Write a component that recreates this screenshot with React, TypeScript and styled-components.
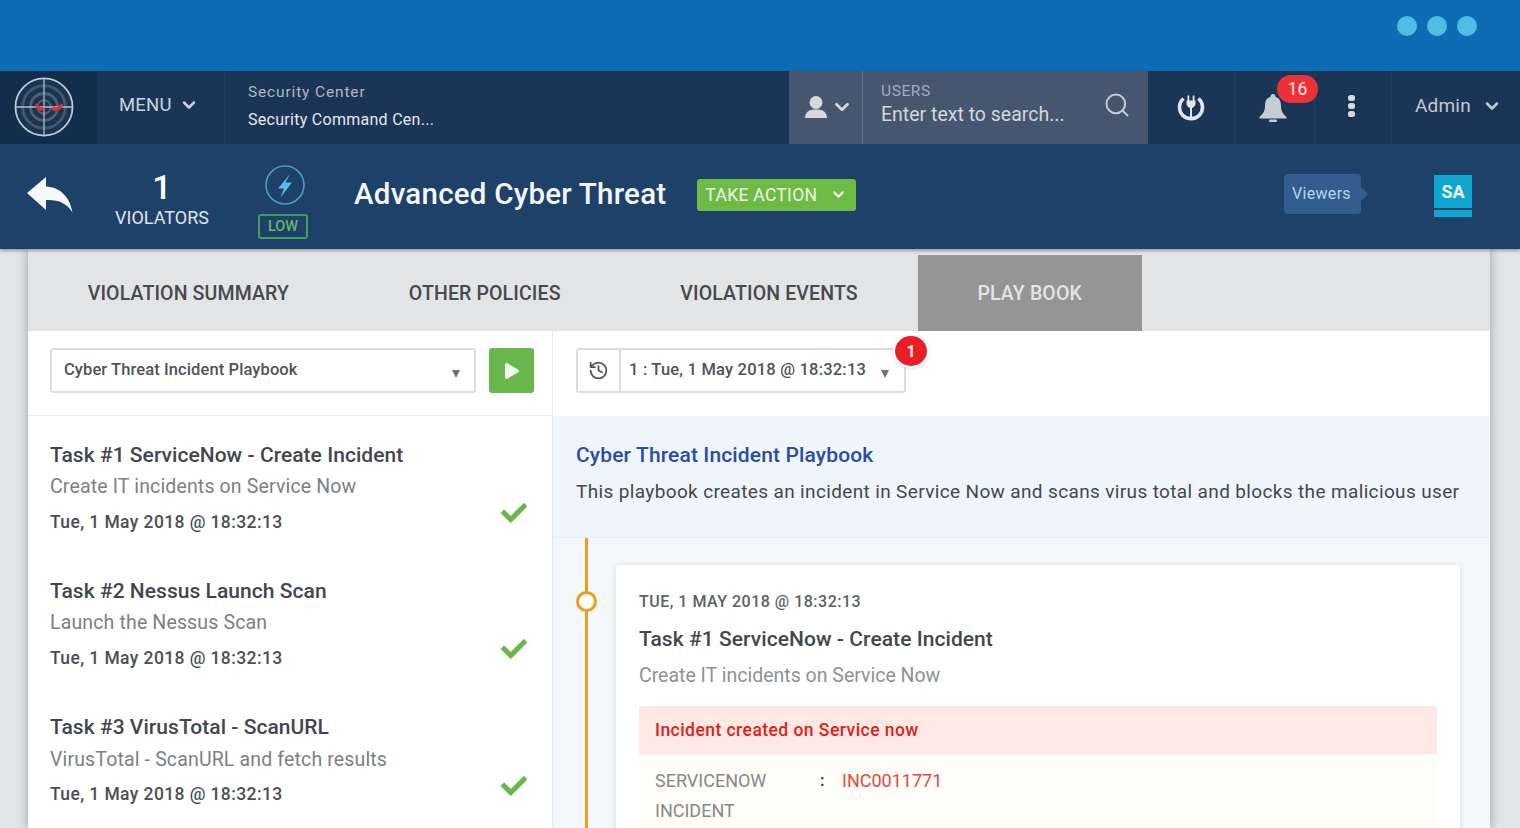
import styled, { createGlobalStyle } from "styled-components";
import { ChevronDown, History, Search } from "lucide-react";
import { FaCheck, FaPlay } from "react-icons/fa";

const tasks = [
  {
    title: "Task #1 ServiceNow - Create Incident",
    desc: "Create IT incidents on Service Now",
  },
  { title: "Task #2 Nessus Launch Scan", desc: "Launch the Nessus Scan" },
  {
    title: "Task #3 VirusTotal - ScanURL",
    desc: "VirusTotal - ScanURL and fetch results",
  },
];

const tabs = ["VIOLATION SUMMARY", "OTHER POLICIES", "VIOLATION EVENTS", "PLAY BOOK"];

const App = () => {
  return (
    <Page>
      <GlobalStyle />
      <TopBand>
        <Dot />
        <Dot />
        <Dot />
      </TopBand>
      <Nav>
        <LogoCell>
          <svg width="60" height="60" viewBox="0 0 62 62" fill="none">
            <circle cx="31" cy="31" r="29.500" stroke="#c3cbd4" strokeWidth="1.800" fill="#1a3350" />
            <circle cx="31" cy="31" r="22" stroke="#42566d" strokeWidth="3" />
            <circle cx="31" cy="31" r="14" stroke="#4c6076" strokeWidth="3" />
            <circle cx="31" cy="31" r="7" stroke="#4c6076" strokeWidth="2" />
            <path d="M31 1v60M1 31h60" stroke="#b6bfca" strokeWidth="1.300" />
            <path
              d="M23.500 29.500c1.500 2.500 3.500 3.500 6.500 3.500M49 29.500c-1.500 2.500-4 3.500-8.500 3.500"
              stroke="#ea2f2a"
              strokeWidth="3.600"
              strokeLinecap="round"
            />
          </svg>
        </LogoCell>
        <MenuCell>
          MENU
          <ChevronDown size={20} strokeWidth={3} />
        </MenuCell>
        <ContextCell>
          <ContextLabel>Security Center</ContextLabel>
          <ContextValue>Security Command Cen...</ContextValue>
        </ContextCell>
        <UserToggle>
          <svg width="22" height="22" viewBox="0 0 22 22" fill="#d5d9de">
            <circle cx="11" cy="6.500" r="6.500" />
            <path d="M0 22c0-5 3-7.500 7.500-8.500h7C19 14.500 22 17 22 22z" />
          </svg>
          <ChevronDown size={22} strokeWidth={3} />
        </UserToggle>
        <SearchCell>
          <div>
            <SearchLabel>USERS</SearchLabel>
            <SearchHint>Enter text to search...</SearchHint>
          </div>
          <Search size={28} strokeWidth={1.700} />
        </SearchCell>
        <IconCell $width={87}>
          <svg width="30" height="27" viewBox="0 0 30 27" fill="none">
            <path
              d="M7.500 4.500A11.500 11.500 0 1 0 22.500 4.500"
              stroke="#e2e6eb"
              strokeWidth="3.600"
            />
            <path
              d="M11.500 1.500h1.800v5h3.400v-5h1.800v5h1v3c0 2.500-2 4-3.500 4.500v10h-2V14c-1.500-.5-3.500-2-3.500-4.500v-3h1z"
              fill="#e2e6eb"
            />
          </svg>
        </IconCell>
        <IconCell $width={80}>
          <BellWrap>
            <svg width="28" height="28" viewBox="0 0 28 28" fill="#c6ccd4">
              <path d="M14 0c2 0 2.500 1.500 2.500 2.800C21 4.500 22 8 22 12c0 5 2 8 5.500 11v1.500H.5V23C4 20 6 17 6 12c0-4 1-7.500 5.500-9.200C11.500 1.500 12 0 14 0z" />
              <rect x="10" y="25.500" width="8" height="2.500" rx="1.200" />
            </svg>
            <BellBadge>16</BellBadge>
          </BellWrap>
        </IconCell>
        <IconCell $width={77}>
          <Kebab>
            <i />
            <i />
            <i />
          </Kebab>
        </IconCell>
        <AdminCell>
          Admin
          <ChevronDown size={20} strokeWidth={3} />
        </AdminCell>
      </Nav>
      <SubHeader>
        <BackCell>
          <svg width="46" height="36" viewBox="0 0 46 36" fill="#f6f8fa">
            <path d="M0 16L19 0v9.500C33 10 43 20 45.500 35.500 40 26 31 22.500 19 23v10z" />
          </svg>
        </BackCell>
        <Violators>
          <strong>1</strong>
          <span>VIOLATORS</span>
        </Violators>
        <Severity>
          <svg width="40" height="40" viewBox="0 0 40 40" fill="none">
            <circle cx="20" cy="20" r="19" stroke="#4d9ac5" strokeWidth="1.600" />
            <path d="M25 9L13 23.500h6L15.500 32.500 27 17.500h-6.500z" fill="#5db9e8" />
          </svg>
          <LowTag>LOW</LowTag>
        </Severity>
        <PageTitle>Advanced Cyber Threat</PageTitle>
        <ActionButton>
          TAKE ACTION
          <ChevronDown size={17} strokeWidth={3} />
        </ActionButton>
        <Viewers>Viewers</Viewers>
        <Avatar>
          <AvatarFace>SA</AvatarFace>
          <AvatarBar />
        </Avatar>
      </SubHeader>
      <Sheet>
        <TabBar>
          {tabs.map((tab, i) => (
            <Tab key={tab} $active={i === 3}>
              {tab}
            </Tab>
          ))}
        </TabBar>
        <Columns>
          <LeftColumn>
            <LeftToolbar>
              <PlaybookSelect>
                Cyber Threat Incident Playbook
                <Caret />
              </PlaybookSelect>
              <PlayButton>
                <FaPlay size={16} />
              </PlayButton>
            </LeftToolbar>
            {tasks.map((task) => (
              <TaskRow key={task.title}>
                <TaskTitle>{task.title}</TaskTitle>
                <TaskDesc>{task.desc}</TaskDesc>
                <TaskDate>Tue, 1 May 2018 @ 18:32:13</TaskDate>
                <TaskCheck>
                  <FaCheck size={26} />
                </TaskCheck>
              </TaskRow>
            ))}
          </LeftColumn>
          <RightColumn>
            <RightToolbar>
              <RunSelect>
                <RunIcon>
                  <History size={21} strokeWidth={2} />
                </RunIcon>
                <RunValue>
                  1 : Tue, 1 May 2018 @ 18:32:13
                  <Caret />
                </RunValue>
                <RunBadge>1</RunBadge>
              </RunSelect>
            </RightToolbar>
            <Intro>
              <IntroTitle>Cyber Threat Incident Playbook</IntroTitle>
              <IntroText>
                This playbook creates an incident in Service Now and scans virus total and blocks the malicious user
              </IntroText>
            </Intro>
            <Timeline>
              <TimelineDot />
              <EventCard>
                <EventDate>TUE, 1 MAY 2018 @ 18:32:13</EventDate>
                <EventTitle>Task #1 ServiceNow - Create Incident</EventTitle>
                <EventDesc>Create IT incidents on Service Now</EventDesc>
                <Alert>
                  <AlertHead>Incident created on Service now</AlertHead>
                  <AlertBody>
                    <AlertKey>SERVICENOW INCIDENT</AlertKey>
                    <AlertColon>:</AlertColon>
                    <AlertValue>INC0011771</AlertValue>
                  </AlertBody>
                </Alert>
              </EventCard>
            </Timeline>
          </RightColumn>
        </Columns>
      </Sheet>
    </Page>
  );
};

const GlobalStyle = createGlobalStyle`
  html, body {
    margin: 0;
    height: 100%;
    overflow: hidden;
  }
  body {
    font-family: Roboto, "Liberation Sans", sans-serif;
  }
  * {
    box-sizing: border-box;
  }
`;
const Page = styled.div`
  width: 1520px;
  height: 828px;
  overflow: hidden;
  display: flex;
  flex-direction: column;
  background: #e1e5e8;
`;
const TopBand = styled.div`
  height: 71px;
  flex: none;
  background: #0d6db4;
  display: flex;
  justify-content: flex-end;
  align-items: flex-start;
  gap: 10px;
  padding: 16px 43px 0 0;
`;
const Dot = styled.span`
  width: 20px;
  height: 20px;
  border-radius: 50%;
  background: #4fbce3;
`;
const Nav = styled.div`
  height: 73px;
  flex: none;
  display: flex;
  background: #1a3556;
  color: #e3e6ea;
`;
const LogoCell = styled.div`
  width: 97px;
  background: #132d4c;
  display: flex;
  align-items: center;
  padding: 0 0 1px 14px;
`;
const MenuCell = styled.div`
  width: 128px;
  display: flex;
  align-items: center;
  gap: 7px;
  padding: 0 0 6px 22px;
  font-size: 18.500px;
  letter-spacing: 0.2px;
  color: #cdd3da;
  border-right: 1px solid #223d5e;
`;
const ContextCell = styled.div`
  width: 564px;
  padding: 12px 0 0 23px;
  display: flex;
  flex-direction: column;
  gap: 8px;
`;
const ContextLabel = styled.span`
  font-size: 15.500px;
  line-height: 19px;
  color: #aeb7c2;
  letter-spacing: 0.85px;
`;
const ContextValue = styled.span`
  font-size: 16px;
  line-height: 19px;
  color: #e6e9ed;
  letter-spacing: 0.28px;
`;
const UserToggle = styled.div`
  width: 74px;
  background: #46566f;
  border-right: 1px solid #66748a;
  display: flex;
  align-items: center;
  gap: 4px;
  padding: 0 0 2px 16px;
  color: #d5d9de;
`;
const SearchCell = styled.div`
  width: 285px;
  background: #46566f;
  display: flex;
  align-items: center;
  justify-content: space-between;
  padding: 0 17px 5px 18px;
  color: #c2c9d2;
`;
const SearchLabel = styled.div`
  font-size: 15.500px;
  line-height: 19px;
  letter-spacing: 0.6px;
  color: #a3adba;
`;
const SearchHint = styled.div`
  font-size: 19.500px;
  line-height: 27px;
  color: #d2d7dd;
`;
const IconCell = styled.div<{ $width: number }>`
  width: ${(p) => p.$width}px;
  display: flex;
  align-items: center;
  justify-content: center;
  border-right: 1px solid #223d5e;
`;
const BellWrap = styled.div`
  position: relative;
  display: flex;
  margin: 1px 0 0 -3px;
`;
const BellBadge = styled.span`
  position: absolute;
  top: -19px;
  left: 18px;
  width: 41px;
  height: 28px;
  border-radius: 14px;
  background: #ec3237;
  color: #fbe9e9;
  font-size: 17.500px;
  display: flex;
  align-items: center;
  justify-content: center;
`;
const Kebab = styled.div`
  display: flex;
  flex-direction: column;
  gap: 1.500px;
  margin: 0 3px 3px 0;

  i {
    width: 7px;
    height: 6.500px;
    border-radius: 2.500px;
    background: #d6dae0;
  }
`;
const AdminCell = styled.div`
  flex: 1;
  display: flex;
  align-items: center;
  gap: 11px;
  padding: 0 0 4px 23px;
  font-size: 19px;
  letter-spacing: 0.2px;
  color: #c2c9d2;
`;
const SubHeader = styled.div`
  height: 105px;
  flex: none;
  display: flex;
  align-items: center;
  background: #1e4169;
  color: #fff;
  box-shadow: 0 2px 3px rgba(0, 0, 0, 0.3);
  position: relative;
  z-index: 1;
`;
const BackCell = styled.div`
  width: 96px;
  padding: 0 0 4px 27px;
  display: flex;
`;
const Violators = styled.div`
  width: 132px;
  display: flex;
  flex-direction: column;
  align-items: center;
  margin-top: 2px;

  strong {
    font-size: 34px;
    line-height: 40px;
    font-weight: 500;
  }
  span {
    font-size: 18px;
    line-height: 21px;
    color: #e0e5ea;
  }
`;
const Severity = styled.div`
  width: 50px;
  margin-left: 30px;
  display: flex;
  flex-direction: column;
  align-items: center;
  gap: 9px;
  padding-top: 11px;

  svg {
    margin-left: 4px;
  }
`;
const LowTag = styled.span`
  width: 50px;
  height: 25px;
  border: 2px solid #3f9f5b;
  border-radius: 3px;
  color: #62b86c;
  font-size: 14.500px;
  font-weight: 500;
  display: flex;
  align-items: center;
  justify-content: center;
`;
const PageTitle = styled.h1`
  margin: 0 0 0 46px;
  padding-bottom: 6px;
  font-size: 29.500px;
  font-weight: 500;
  letter-spacing: 0.24px;
  color: #f4f6f8;
  white-space: nowrap;
`;
const ActionButton = styled.div`
  margin: 0 0 4px 31px;
  width: 159px;
  height: 32px;
  flex: none;
  background: #6dbb45;
  border-radius: 3px;
  color: #edf7e8;
  font-size: 17.500px;
  letter-spacing: 0.3px;
  display: flex;
  align-items: center;
  justify-content: space-between;
  padding: 0 9px 0 8px;
`;
const Viewers = styled.div`
  margin: 0 0 6px auto;
  width: 77px;
  height: 40px;
  background: #335d8e;
  border-radius: 4px;
  color: #b5d6ef;
  font-size: 16px;
  letter-spacing: 0.3px;
  padding-right: 2px;
  display: flex;
  align-items: center;
  justify-content: center;
  position: relative;

  &::after {
    content: "";
    position: absolute;
    right: -7px;
    top: 13px;
    border-left: 7px solid #335d8e;
    border-top: 7px solid transparent;
    border-bottom: 7px solid transparent;
  }
`;
const Avatar = styled.div`
  width: 38px;
  margin: 0 48px 1px 73px;
  display: flex;
  flex-direction: column;
  gap: 2px;
`;
const AvatarFace = styled.div`
  height: 33px;
  background: #0fa7cf;
  color: #eaf8fc;
  font-size: 18px;
  font-weight: 700;
  display: flex;
  align-items: center;
  justify-content: center;
`;
const AvatarBar = styled.div`
  height: 7px;
  background: #0fa7cf;
`;
const Sheet = styled.div`
  flex: 1;
  margin: 0 30px 0 28px;
  padding-top: 6px;
  background: #e3e4e6;
  display: flex;
  flex-direction: column;
  min-height: 0;
  box-shadow: 0 0 10px rgba(0, 0, 0, 0.32);
`;
const TabBar = styled.div`
  height: 76px;
  flex: none;
  display: flex;
`;
const Tab = styled.div<{ $active?: boolean }>`
  padding: 0 60px 0 59.700px;
  display: flex;
  align-items: center;
  font-size: 19.500px;
  font-weight: 500;
  letter-spacing: 0.14px;
  color: ${(p) => (p.$active ? "#e4e4e4" : "#46494e")};
  background: ${(p) => (p.$active ? "#959595" : "transparent")};
  white-space: nowrap;
`;
const Columns = styled.div`
  flex: 1;
  display: flex;
  background: #fff;
  min-height: 0;
`;
const LeftColumn = styled.div`
  width: 525px;
  flex: none;
  border-right: 1px solid #e8eaed;
`;
const LeftToolbar = styled.div`
  height: 85px;
  display: flex;
  gap: 13px;
  padding: 17px 18px 0 22px;
  border-bottom: 1px solid #e8eaed;
`;
const PlaybookSelect = styled.div`
  width: 427px;
  height: 45px;
  border: 2px solid #dcdddf;
  border-radius: 3px;
  display: flex;
  align-items: center;
  justify-content: space-between;
  padding: 0 14px 2px 12px;
  font-size: 16.500px;
  font-weight: 500;
  letter-spacing: 0.1px;
  color: #505359;
`;
const Caret = styled.span`
  border-top: 8px solid #6e7074;
  border-left: 4.500px solid transparent;
  border-right: 4.500px solid transparent;
  margin-top: 9px;
`;
const PlayButton = styled.div`
  width: 45px;
  height: 45px;
  flex: none;
  background: #69b74a;
  border-radius: 3px;
  color: #f3f9ef;
  display: flex;
  align-items: center;
  justify-content: center;
`;
const TaskRow = styled.div`
  height: 136.400px;
  padding: 23.500px 22px 0;
  position: relative;
`;
const TaskTitle = styled.div`
  font-size: 21px;
  line-height: 30px;
  font-weight: 500;
  letter-spacing: 0.04px;
  color: #43464c;
`;
const TaskDesc = styled.div`
  margin-top: 2.500px;
  font-size: 19.500px;
  line-height: 30px;
  letter-spacing: 0.15px;
  color: #7c8087;
`;
const TaskDate = styled.div`
  margin-top: 4.500px;
  font-size: 17.500px;
  line-height: 30px;
  font-weight: 500;
  letter-spacing: 0.4px;
  color: #4c4f55;
`;
const TaskCheck = styled.span`
  position: absolute;
  right: 25px;
  top: 84px;
  display: flex;
  color: #68b84a;
`;
const RightColumn = styled.div`
  flex: 1;
  min-width: 0;
  display: flex;
  flex-direction: column;
`;
const RightToolbar = styled.div`
  height: 85px;
  flex: none;
  padding: 17px 0 0 23px;
`;
const RunSelect = styled.div`
  width: 330px;
  height: 45px;
  border: 2px solid #dcdddf;
  border-radius: 3px;
  display: flex;
  position: relative;
`;
const RunIcon = styled.div`
  width: 43px;
  flex: none;
  border-right: 2px solid #dcdddf;
  display: flex;
  align-items: center;
  justify-content: center;
  color: #505359;
`;
const RunValue = styled.div`
  flex: 1;
  display: flex;
  align-items: center;
  justify-content: space-between;
  padding: 0 15px 2px 8px;
  font-size: 16.500px;
  font-weight: 500;
  letter-spacing: 0.2px;
  color: #505359;
  white-space: nowrap;
`;
const RunBadge = styled.span`
  position: absolute;
  top: -14px;
  right: -23px;
  width: 32px;
  height: 30px;
  border-radius: 50%;
  background: #e81f25;
  color: #fdeaea;
  font-size: 16px;
  font-weight: 700;
  display: flex;
  align-items: center;
  justify-content: center;
  box-shadow: 0 0 0 2px #fff, 0 1px 5px rgba(0, 0, 0, 0.3);
`;
const Intro = styled.div`
  height: 122px;
  flex: none;
  background: #eef6fc;
  padding: 24px 0 0 23px;
  border-bottom: 1px solid #e8eff5;
`;
const IntroTitle = styled.div`
  font-size: 21px;
  line-height: 30px;
  font-weight: 500;
  letter-spacing: 0.13px;
  color: #2a4ba6;
`;
const IntroText = styled.div`
  margin-top: 7px;
  font-size: 19px;
  line-height: 30px;
  letter-spacing: 0.36px;
  color: #44474d;
  white-space: nowrap;
`;
const Timeline = styled.div`
  flex: 1;
  background: #f5f8fb;
  padding: 27px 30px 0 63px;
  position: relative;

  &::before {
    content: "";
    position: absolute;
    left: 32px;
    top: 0;
    bottom: 0;
    width: 3px;
    background: #f39a21;
  }
`;
const TimelineDot = styled.span`
  position: absolute;
  left: 23px;
  top: 53px;
  width: 21px;
  height: 21px;
  border-radius: 50%;
  border: 3px solid #f39a21;
  background: #fff;
`;
const EventCard = styled.div`
  height: 300px;
  background: #fff;
  border-radius: 3px;
  box-shadow: 0 1px 6px rgba(0, 0, 0, 0.12);
  padding: 25px 23px 0;
`;
const EventDate = styled.div`
  font-size: 16px;
  line-height: 24px;
  font-weight: 500;
  letter-spacing: 0.5px;
  color: #5c6066;
`;
const EventTitle = styled.div`
  margin-top: 10px;
  font-size: 21px;
  line-height: 30px;
  font-weight: 500;
  letter-spacing: 0.06px;
  color: #43464c;
`;
const EventDesc = styled.div`
  margin-top: 7px;
  font-size: 19.500px;
  line-height: 30px;
  color: #8e9197;
`;
const Alert = styled.div`
  margin-top: 15px;
  border-radius: 2px;
  overflow: hidden;
`;
const AlertHead = styled.div`
  height: 48px;
  background: #fde8e4;
  color: #d9231f;
  font-size: 17.500px;
  font-weight: 500;
  letter-spacing: 0.45px;
  display: flex;
  align-items: center;
  padding-left: 16px;
`;
const AlertBody = styled.div`
  background: #fffdf8;
  display: flex;
  padding: 12px 16px;
  min-height: 100px;
  line-height: 30px;
`;
const AlertKey = styled.span`
  width: 165px;
  font-size: 18px;
  color: #85888d;
`;
const AlertColon = styled.span`
  width: 22px;
  font-weight: 700;
  color: #3c3f44;
`;
const AlertValue = styled.span`
  font-size: 18px;
  color: #dd4a45;
`;

export default App;
